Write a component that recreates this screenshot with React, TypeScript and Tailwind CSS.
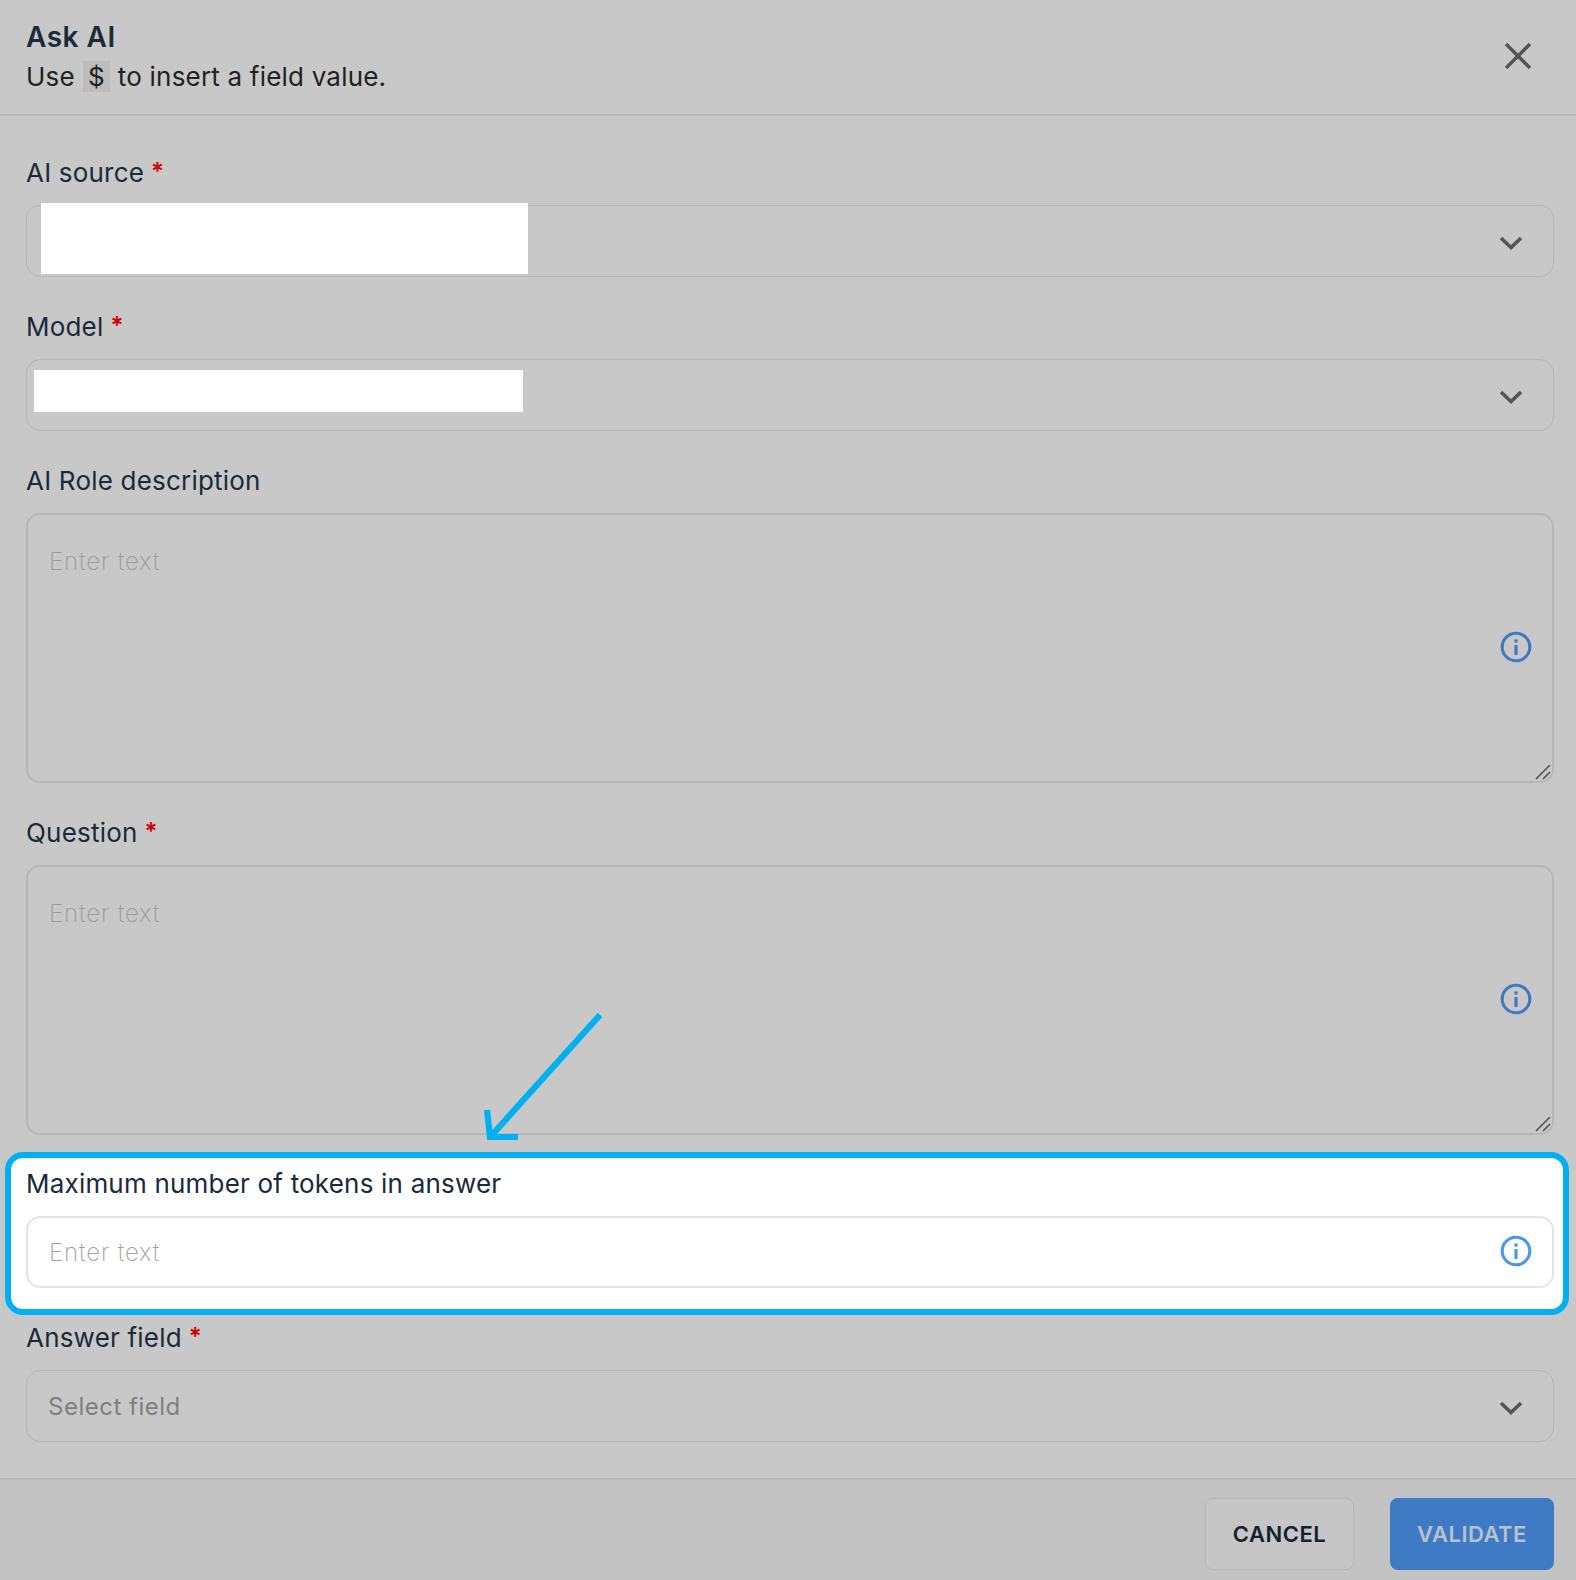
import React from "react";

const font = { fontFamily: '"Inter", "Liberation Sans", sans-serif' };

function Chevron() {
  return (
    <svg width="24" height="16" viewBox="0 0 24 16" fill="none" className="shrink-0 mt-[4px]">
      <path d="M2 3 L12 12.5 L22 3" stroke="#555555" strokeWidth="3.6" />
    </svg>
  );
}

function Info({ color }: { color: string }) {
  return (
    <svg width="32" height="32" viewBox="0 0 32 32" fill="none" className="absolute right-[22px] top-1/2 -translate-y-1/2 -mt-[1px]">
      <circle cx="16" cy="16" r="13.8" stroke={color} strokeWidth="3.1" />
      <rect x="14.4" y="14" width="3.2" height="10" fill={color} />
      <rect x="14.4" y="8.4" width="3.2" height="3.2" fill={color} />
    </svg>
  );
}

function Label({ text, required }: { text: string; required?: boolean }) {
  return (
    <div className="h-[34px] mb-4 pt-[2px] flex items-center text-[26px] leading-[32px] tracking-[0.2px] text-[#1b2a38]">
      <span>{text}</span>
      {required && <span className="ml-[7px] -mt-[2px] text-[24px] text-[#d00000] font-semibold">*</span>}
    </div>
  );
}

function Select({ placeholder, children }: { placeholder?: string; children?: React.ReactNode }) {
  return (
    <div className="relative h-[72px] rounded-[14px] border border-[#b6b6b6] flex items-center justify-between pl-[21px] pr-[30px]">
      <span className="mt-[2px] text-[24px] tracking-[0.5px] text-[#7f7f7f]">{placeholder}</span>
      <Chevron />
      {children}
    </div>
  );
}

function Area() {
  return (
    <div className="relative h-[270px]">
      <textarea
        placeholder="Enter text"
        className="block w-full h-full resize-none rounded-[14px] border-2 border-[#b6b6b6] bg-transparent pl-[21px] pt-[30px] text-[24px] leading-[34px] font-extralight tracking-[0.9px] outline-none placeholder:text-[#9a9a9a]"
      />
      <Info color="#3f7ac4" />
      <svg width="16" height="16" viewBox="0 0 16 16" fill="none" className="absolute right-[3px] bottom-[3px]">
        <path d="M1 15 L15 1 M8 15 L15 8" stroke="#555555" strokeWidth="1.6" />
      </svg>
    </div>
  );
}

export default function App() {
  return (
    <div style={font} className="w-[1576px] h-[1580px] overflow-hidden bg-[#c8c8c8] flex flex-col">
      <header className="h-[116px] shrink-0 border-b-2 border-[#b8b8b8] pl-[26px] pr-[43px] flex items-center justify-between">
        <div className="-mt-[1px]">
          <div className="text-[28px] leading-[37px] font-semibold tracking-[0.5px] text-[#1a2b3a]">Ask AI</div>
          <div className="mt-[3px] text-[26px] leading-[36px] tracking-[0.2px] text-[#222222] flex items-center">
            Use
            <code className="ml-[8px] mr-[8px] w-[27px] h-[31px] flex items-center justify-center bg-[#bcbcbc] text-[26px]" style={font}>$</code>
            to insert a field value.
          </div>
        </div>
        <svg width="30" height="30" viewBox="0 0 30 30" fill="none" className="-mt-[2px]">
          <path d="M3 3 L27 27 M27 3 L3 27" stroke="#555555" strokeWidth="3.4" />
        </svg>
      </header>

      <main className="relative flex-1 pl-[26px] pr-[22px] pt-[39px]">
        <Label text="AI source" required />
        <Select>
          <div className="absolute left-[14px] -top-[3px] w-[487px] h-[71px] bg-white" />
        </Select>

        <div className="mt-8">
          <Label text="Model" required />
          <Select>
            <div className="absolute left-[7px] top-[10px] w-[489px] h-[42px] bg-white" />
          </Select>
        </div>

        <div className="mt-8">
          <Label text="AI Role description" />
          <Area />
        </div>

        <div className="mt-8">
          <Label text="Question" required />
          <Area />
        </div>

        <section className="mt-[17px] -ml-[21px] -mr-[15px] border-[6px] border-[#00b0f0] rounded-[18px] bg-white pl-[15px] pr-[9px] pt-[8px] pb-[21px]">
          <Label text="Maximum number of tokens in answer" />
          <div className="relative h-[72px]">
            <input
              placeholder="Enter text"
              className="block w-full h-full rounded-[14px] border-2 border-[#e4e4e4] bg-white pl-[21px] text-[24px] font-extralight tracking-[0.9px] outline-none placeholder:text-[#a0a0a0]"
            />
            <Info color="#4c94f2" />
          </div>
        </section>

        <div className="mt-[5px]">
          <Label text="Answer field" required />
          <Select placeholder="Select field" />
        </div>

        <svg width="140" height="140" viewBox="0 0 140 140" fill="none" className="absolute left-[480px] top-[897px]">
          <path d="M120 2 L12 122" stroke="#00b0f0" strokeWidth="6.2" />
          <path d="M7 97 L10 124 L38 124" stroke="#00b0f0" strokeWidth="6.2" />
        </svg>
      </main>

      <footer className="h-[102px] shrink-0 border-t-2 border-[#b8b8b8] bg-[#c2c2c2] flex justify-end gap-[36px] pt-[18px] pr-[22px]">
        <button className="w-[149px] h-[72px] rounded-[8px] border border-[#b4b4b4] bg-[#c6c6c6] text-[22px] font-semibold tracking-[0.5px] text-[#14212e]">CANCEL</button>
        <button className="w-[164px] h-[72px] rounded-[8px] bg-[#3f7ac4] text-[22px] font-semibold tracking-[0.5px] text-[#b7c2cf]">VALIDATE</button>
      </footer>
    </div>
  );
}
